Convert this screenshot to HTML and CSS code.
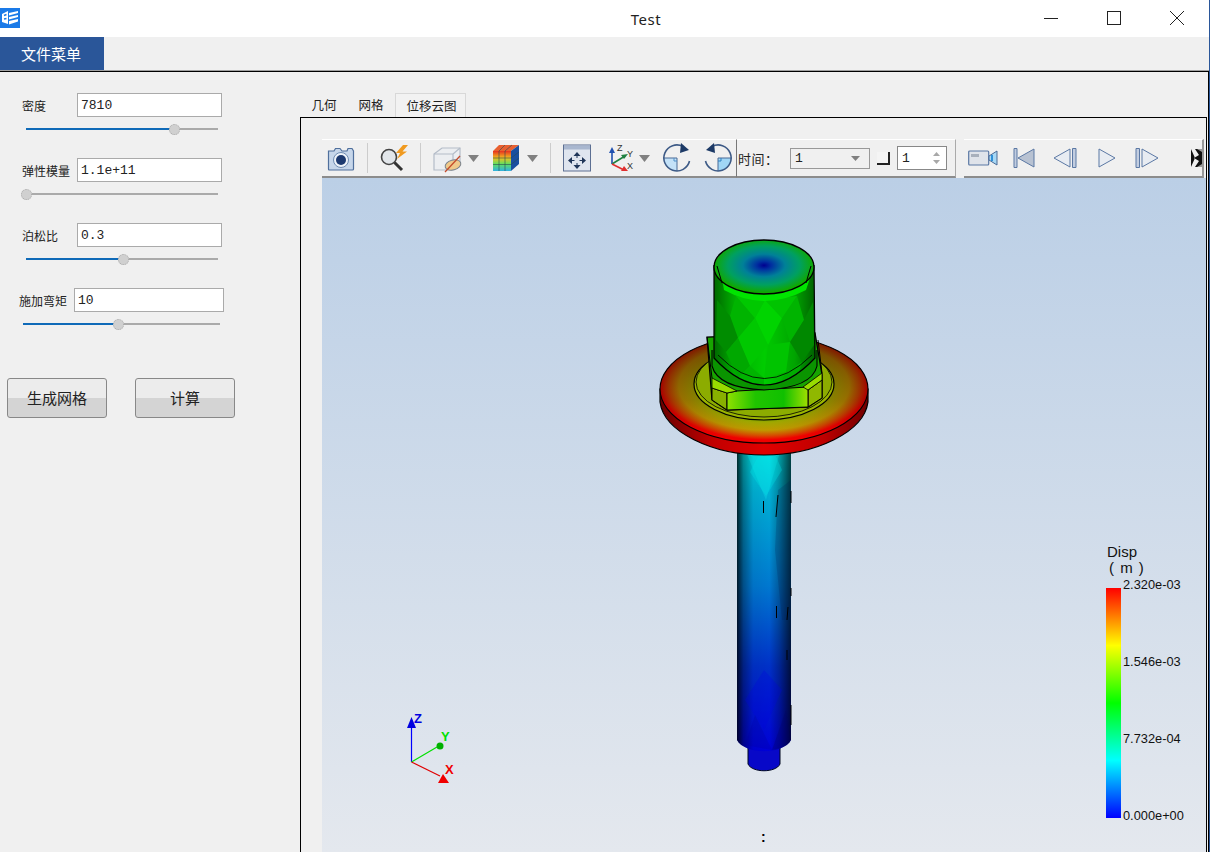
FILE: index.html
```html
<!DOCTYPE html>
<html lang="en">
<head>
  <meta charset="UTF-8">
  <title>Test</title>
  <link rel="stylesheet" href="styles.css">
</head>
<body>
<div class="window">

  <!-- Title bar -->
  <div class="titlebar">
    <svg class="app-logo" viewBox="0 0 20 20">
      <rect width="20" height="20" fill="#1a7ae8"/>
      <path d="M2 6 L8 3 L8 16 L2 14 Z" fill="#fff"/>
      <path d="M4 7.5 L6.5 6.5 M4 11 L6.5 10.5" stroke="#1a7ae8" stroke-width="1.4"/>
      <path d="M9 5 L18 3 L18 5 L9 7.5 Z M9 9 L18 7 L18 9 L9 11.5 Z M9 13 L18 11 L18 13.5 L9 16.5 Z" fill="#fff"/>
    </svg>
    <div class="title">Test</div>
    <svg class="win-ctrl min" viewBox="0 0 14 14"><path d="M0 7.5 H14" stroke="#222" fill="none"/></svg>
    <svg class="win-ctrl max" viewBox="0 0 14 14"><rect x="0.5" y="0.5" width="13" height="13" stroke="#222" fill="none"/></svg>
    <svg class="win-ctrl close" viewBox="0 0 14 14"><path d="M0 0 L14 14 M14 0 L0 14" stroke="#222" fill="none"/></svg>
  </div>

  <!-- Menu -->
  <div class="menubar">
    <button class="menu-tab">文件菜单</button>
  </div>

  <div class="content">

    <!-- Parameters -->
    <div class="side">
      <div class="field">
        <div class="field-row">
          <label>密度</label>
          <input type="text" value="7810">
        </div>
        <div class="slider"><div class="slider-fill" style="width: 77%"></div><div class="slider-knob" style="left: 77%"></div></div>
      </div>
      <div class="field">
        <div class="field-row">
          <label>弹性模量</label>
          <input type="text" value="1.1e+11">
        </div>
        <div class="slider"><div class="slider-fill" style="width: 0%"></div><div class="slider-knob" style="left: 0%"></div></div>
      </div>
      <div class="field">
        <div class="field-row">
          <label>泊松比</label>
          <input type="text" value="0.3">
        </div>
        <div class="slider"><div class="slider-fill" style="width: 50.5%"></div><div class="slider-knob" style="left: 50.5%"></div></div>
      </div>
      <div class="field field-wide">
        <div class="field-row">
          <label>施加弯矩</label>
          <input type="text" value="10">
        </div>
        <div class="slider"><div class="slider-fill" style="width: 48%"></div><div class="slider-knob" style="left: 48%"></div></div>
      </div>
      <div class="actions">
        <button class="action-btn">生成网格</button>
        <button class="action-btn">计算</button>
      </div>
    </div>

    <!-- Result views -->
    <div class="main">
      <div class="tabs">
        <div class="tab">几何</div>
        <div class="tab">网格</div>
        <div class="tab active">位移云图</div>
      </div>
      <div class="pane">
        <div class="toolbar">
          <div class="tool-seg seg-view">
            <svg class="tool" viewBox="0 0 28 28">
              <path d="M1.5 7 H7 L8.5 4.5 H13 L15 7 H20 L21 4.5 H25 L26.5 7 V25 Q26.5 26 25.5 26 H2.5 Q1.5 26 1.5 25 Z" fill="#c6d6ea" stroke="#4f6f9c" stroke-width="1.2"/>
              <circle cx="14" cy="16" r="7.5" fill="#eef3f9" stroke="#6f8cb2"/>
              <circle cx="14" cy="16" r="5" fill="#1d3a70"/>
            </svg>
            <div class="tool-sep"></div>
            <svg class="tool" viewBox="0 0 28 28">
              <circle cx="9" cy="13" r="7.5" fill="#e2e6ea" stroke="#444" stroke-width="1.6"/>
              <path d="M14.5 18.5 L22 26" stroke="#333" stroke-width="3"/>
              <path d="M23 1 L16 9 H20 L17 15 L27 7.5 H22.5 L28 1 Z" fill="#f09a20"/>
            </svg>
            <div class="tool-sep"></div>
            <svg class="tool" viewBox="0 0 28 28">
              <path d="M1 10 L9 4 H27 V19 L20 26 H1 Z" fill="#eceef1" stroke="#b4bcc8" stroke-width="1.2"/>
              <path d="M1 10 H20 V26 M20 10 L27 4" fill="none" stroke="#b4bcc8" stroke-width="1.2"/>
              <ellipse cx="20" cy="21" rx="8" ry="5" fill="#efc98a" stroke="#77808c" transform="rotate(-15 20 21)"/>
              <path d="M12 28 L27 12" stroke="#c44a2a" stroke-width="1.2"/>
            </svg>
            <svg class="drop ml7" viewBox="0 0 11 7"><path d="M0 0 H11 L5.5 7 Z" fill="#808080"/></svg>
            <svg class="tool ml13" viewBox="0 0 28 28">
              <defs>
                <linearGradient id="cubeFace" x1="0" y1="0" x2="0" y2="1">
                  <stop offset="0" stop-color="#e83020"/><stop offset=".35" stop-color="#f0c020"/>
                  <stop offset=".65" stop-color="#60e060"/><stop offset="1" stop-color="#30b0e0"/>
                </linearGradient>
              </defs>
              <path d="M1 7 H19 V27 H1 Z" fill="url(#cubeFace)"/>
              <path d="M1 7 L7 1 H27 L19 7 Z" fill="#e86030"/>
              <path d="M19 7 L27 1 V20 L19 27 Z" fill="#1a4fa0"/>
              <path d="M7 7 V27 M13 7 V27 M1 14 H19 M1 20.5 H19 M7 7 L13 1 M13 7 L20 1 M19 14 L27 8 M19 20.5 L27 14" stroke="#2a4a50" stroke-width=".6" fill="none"/>
            </svg>
            <svg class="drop ml7" viewBox="0 0 11 7"><path d="M0 0 H11 L5.5 7 Z" fill="#808080"/></svg>
            <div class="tool-sep"></div>
            <svg class="tool" viewBox="0 0 28 28">
              <rect x=".5" y="1" width="27" height="26" fill="#dfe5ef" stroke="#5c6f92"/>
              <rect x="1" y="1.5" width="26" height="4" fill="#a9b7cf"/>
              <path d="M14 8 L10.5 12 H17.5 Z M14 25 L10.5 21 H17.5 Z M5 16.5 L9 13 V20 Z M23 16.5 L19 13 V20 Z" fill="#1f3558"/>
              <path d="M14 12 V14 M14 19 V21 M9 16.5 H11.5 M16.5 16.5 H19" stroke="#1f3558"/>
            </svg>
            <svg class="tool ml16" viewBox="0 0 28 28">
              <path d="M5 20 V7" stroke="#2050b0" stroke-width="1.6"/><path d="M5 3 L2 9 H8 Z" fill="#2050b0"/>
              <path d="M5 20 L18 12" stroke="#208040" stroke-width="1.6"/><path d="M21 10 L14 11 L17 15 Z" fill="#208040"/>
              <path d="M5 20 L17 26" stroke="#e03030" stroke-width="1.6"/><path d="M21 27 L14 27 L17 22 Z" fill="#e03030"/>
              <text class="axis-mini" x="10" y="7">Z</text>
              <text class="axis-mini" x="20" y="13">Y</text>
              <text class="axis-mini" x="20" y="25">X</text>
            </svg>
            <svg class="drop ml4" viewBox="0 0 11 7"><path d="M0 0 H11 L5.5 7 Z" fill="#808080"/></svg>
            <svg class="tool ml13" viewBox="0 0 28 28">
              <path d="M14 14 V27 A13 13 0 0 1 1 14 Z" fill="#c4e2f8"/>
              <path d="M1 14 H14 V27" fill="none" stroke="#4a6a96"/>
              <path d="M11 14 V17 H14" fill="none" stroke="#5090c8"/>
              <path d="M20 2.5 A13 13 0 1 0 26.5 17" fill="none" stroke="#3d5a86" stroke-width="1.6"/>
              <path d="M18 -1 L26 6 L17 9 Z" fill="#1d3a66"/>
            </svg>
            <svg class="tool ml13" viewBox="0 0 28 28">
              <path d="M14 14 H27 A13 13 0 0 1 14 27 Z" fill="#a0d6f6"/>
              <path d="M14 27 V14 H27" fill="none" stroke="#4a6a96"/>
              <path d="M14 17 H17 V14" fill="none" stroke="#3080c0"/>
              <path d="M8 2.5 A13 13 0 1 1 1.5 17" fill="none" stroke="#3d5a86" stroke-width="1.6"/>
              <path d="M10 -1 L2 6 L11 9 Z" fill="#1d3a66"/>
            </svg>
          </div>

          <div class="tool-seg seg-time">
            <span class="time-label">时间：</span>
            <div class="combo"><span>1</span><svg class="combo-arrow" viewBox="0 0 9 5"><path d="M0 0 H9 L4.5 5 Z" fill="#808080"/></svg></div>
            <div class="corner"></div>
            <div class="spin">
              <span>1</span>
              <svg class="spin-arrows" viewBox="0 0 7 12"><path d="M3.5 0 L7 4 H0 Z M3.5 12 L0 8 H7 Z" fill="#a8a8a8"/></svg>
            </div>
          </div>

          <div class="tool-seg seg-play">
            <svg class="tool-wide" viewBox="0 0 30 18">
              <rect x=".7" y="2" width="20" height="14" rx="1" fill="#dfe3ea" stroke="#5b78a4" stroke-width="1.2"/>
              <rect x="3" y="5" width="8" height="3" fill="#a8b0bc"/>
              <path d="M21 7 L29 2 V16 L21 11 Z" fill="#a8d8f4" stroke="#4a6a96"/>
              <path d="M24 6 V12" stroke="#2f90d8" stroke-width="2"/>
            </svg>
            <svg class="tool-step ml15" viewBox="0 0 22 20">
              <path d="M1 0.5 H4 V19.5 H1 Z" fill="#c2cde0" stroke="#5b78a4"/>
              <path d="M21 1 V19 L5 10 Z" fill="#b8c2d2" stroke="#5b78a4"/>
            </svg>
            <svg class="tool-step2 ml18" viewBox="0 0 24 20">
              <path d="M17 1 V19 L1 10 Z" fill="#e8ecf2" stroke="#5b78a4"/>
              <path d="M19.5 0.5 H23 V19.5 H19.5 Z" fill="#c2cde0" stroke="#5b78a4"/>
            </svg>
            <svg class="tool-play ml21" viewBox="0 0 18 20">
              <path d="M1 1 V19 L17 10 Z" fill="#e8ecf2" stroke="#5b78a4"/>
            </svg>
            <svg class="tool-step2 ml19" viewBox="0 0 24 20">
              <path d="M1 0.5 H4.5 V19.5 H1 Z" fill="#c2cde0" stroke="#5b78a4"/>
              <path d="M7 1 V19 L23 10 Z" fill="#e8ecf2" stroke="#5b78a4"/>
            </svg>
            <svg class="tool-more" viewBox="0 0 11 18">
              <rect width="11" height="18" fill="#111"/>
              <path d="M0 0 H4 L8 6 L3 9 L8 12 L4 18 H0 L4 9 Z" fill="#f0f0f0"/>
              <path d="M6 0 H11 V3 Z M6 18 H11 V15 Z" fill="#999"/>
            </svg>
          </div>
        </div>

        <div class="viewport">
          <svg class="scene" viewBox="322 178 883 674">
            <defs>
              <linearGradient id="shaftColor" x1="0" y1="0" x2="0" y2="1">
                <stop offset="0" stop-color="#00d8dc"/>
                <stop offset=".14" stop-color="#00b0d4"/>
                <stop offset=".45" stop-color="#0078d0"/>
                <stop offset=".72" stop-color="#0030c8"/>
                <stop offset="1" stop-color="#0000d8"/>
              </linearGradient>
              <linearGradient id="shaftShade" x1="0" y1="0" x2="1" y2="0">
                <stop offset="0" stop-color="#000" stop-opacity=".8"/>
                <stop offset=".12" stop-color="#000" stop-opacity=".35"/>
                <stop offset=".3" stop-color="#000" stop-opacity=".05"/>
                <stop offset=".6" stop-color="#000" stop-opacity="0"/>
                <stop offset=".78" stop-color="#000" stop-opacity=".25"/>
                <stop offset="1" stop-color="#000" stop-opacity=".7"/>
              </linearGradient>
              <radialGradient id="flangeTop" cx=".5" cy=".47" r=".5">
                <stop offset=".5" stop-color="#40c000"/>
                <stop offset=".68" stop-color="#b0c000"/>
                <stop offset=".82" stop-color="#c8a400"/>
                <stop offset=".92" stop-color="#d85000"/>
                <stop offset="1" stop-color="#f00000"/>
              </radialGradient>
              <linearGradient id="flangeShade" x1="0" y1="0" x2="0" y2="1">
                <stop offset="0" stop-color="#300000" stop-opacity=".6"/>
                <stop offset=".6" stop-color="#300000" stop-opacity=".32"/>
                <stop offset=".95" stop-color="#300000" stop-opacity="0"/>
              </linearGradient>
              <linearGradient id="flangeSide" x1="0" y1="0" x2="1" y2="0">
                <stop offset="0" stop-color="#6a0000"/>
                <stop offset=".25" stop-color="#c00000"/>
                <stop offset=".5" stop-color="#e00000"/>
                <stop offset=".78" stop-color="#c00000"/>
                <stop offset="1" stop-color="#700000"/>
              </linearGradient>
              <linearGradient id="capSide" x1="0" y1="0" x2="1" y2="0">
                <stop offset="0" stop-color="#006800"/>
                <stop offset=".2" stop-color="#00ac00"/>
                <stop offset=".5" stop-color="#00cc00"/>
                <stop offset=".8" stop-color="#00a400"/>
                <stop offset="1" stop-color="#006000"/>
              </linearGradient>
              <radialGradient id="capTop" cx=".5" cy=".47" r=".5">
                <stop offset="0" stop-color="#000090"/>
                <stop offset=".15" stop-color="#0030a0"/>
                <stop offset=".42" stop-color="#008098"/>
                <stop offset=".72" stop-color="#00a060"/>
                <stop offset="1" stop-color="#10a800"/>
              </radialGradient>
              <linearGradient id="nutFront" x1="0" y1="0" x2="1" y2="0">
                <stop offset="0" stop-color="#90e000"/>
                <stop offset=".35" stop-color="#20c400"/>
                <stop offset=".7" stop-color="#10c000"/>
                <stop offset="1" stop-color="#a0e000"/>
              </linearGradient>
              <linearGradient id="legendBar" x1="0" y1="0" x2="0" y2="1">
                <stop offset="0" stop-color="#ff0000"/>
                <stop offset=".25" stop-color="#ffff00"/>
                <stop offset=".5" stop-color="#00ff00"/>
                <stop offset=".75" stop-color="#00ffff"/>
                <stop offset="1" stop-color="#0000ff"/>
              </linearGradient>
              <clipPath id="shaftClip"><path d="M737 450 V740 C745 755 783 755 791 740 V450 Z"/></clipPath>
              <clipPath id="capClip"><path d="M714 265 L714 358 Q764 412 815 358 L814 265 Z"/></clipPath>
            </defs>

            <!-- shaft -->
            <path d="M748 745 V764 C752 773 776 773 780 764 V745 Z" fill="#0808c8" stroke="#000820" class="edge"/>
            <path d="M737 450 V740 C745 755 783 755 791 740 V450 Z" fill="url(#shaftColor)"/>
            <path d="M737 450 V740 C745 755 783 755 791 740 V450 Z" fill="url(#shaftShade)"/>
            <g clip-path="url(#shaftClip)">
              <path d="M746 452 L766 500 L780 452 Z" fill="#20ffff" opacity=".2"/>
              <path d="M760 452 L750 472 L766 496 L782 470 L774 452 Z" fill="#00e8e8" opacity=".3"/>
              <path d="M778 490 L775 550 L782 620 L791 620 L791 480 Z" fill="#001850" opacity=".2"/>
              <path d="M745 700 L764 730 L782 690 L764 670 Z" fill="#0000e0" opacity=".25"/>
              <path d="M745 745 L755 715 L772 750 Z" fill="#000090" opacity=".2"/>
              <path d="M772 750 L786 710 L791 745 Z" fill="#000060" opacity=".25"/>
            </g>
            <path d="M763.5 501 V513 M778 495 L776 517 M791 491 V503 M776.5 606 V618 M788 607 L787 620 M791 588 V596 M791 705 V725 M787 650 V660" stroke="#000" fill="none"/>

            <!-- flange -->
            <path d="M660 389 V402 C664 432 712 455 764 455 C816 455 864 432 868 402 V389 Z" fill="url(#flangeSide)" stroke="#000" stroke-width="1.2"/>
            <ellipse cx="764" cy="389" rx="104" ry="54" fill="url(#flangeTop)"/>
            <ellipse cx="764" cy="389" rx="104" ry="54" fill="url(#flangeShade)"/>
            <ellipse cx="764" cy="389" rx="104" ry="54" fill="none" stroke="#000" stroke-width="1.1"/>
            <ellipse cx="764" cy="384" rx="70" ry="36" fill="#9ab400" stroke="#000" stroke-width="1.2"/>
            <ellipse cx="764" cy="382" rx="68" ry="35" fill="#8cac00" stroke="#000" stroke-width=".8"/>

            <!-- nut -->
            <path d="M707 337 L712 400 L727 410 L808 407 L822 398 V375 L815 333 Z" fill="#18a400" stroke="#000" stroke-width="1.3"/>
            <path d="M712 388 L727 393 V410 L712 400 Z" fill="#88b000" stroke="#000"/>
            <path d="M808 390 L822 380 V398 L808 407 Z" fill="#90b800" stroke="#000"/>
            <path d="M727 393 L737 391 L808 387 V407 L727 410 Z" fill="url(#nutFront)" stroke="#000"/>
            <path d="M712 378 L737 391 L727 393 L712 388 Z" fill="#98dc00" stroke="#000" stroke-width=".8"/>
            <path d="M803 387 L822 373 V380 L808 390 Z" fill="#98dc00" stroke="#000" stroke-width=".8"/>
            <path d="M707 337 L712 378 M818 340 L822 373" stroke="#000" fill="none"/>
            <path d="M712 350 V366 Q718 388 764 390 Q812 388 817 366 V350" fill="#0a9400" stroke="#000" stroke-width="1.1"/>

            <!-- cap -->
            <path d="M714 265 L714 358 Q764 412 815 358 L814 265 Z" fill="url(#capSide)"/>
            <g clip-path="url(#capClip)">
              <path d="M736 296 L755 318 L738 338 L730 316 Z" fill="#00b400"/>
              <path d="M755 318 L765 300 L782 318 L768 345 Z" fill="#00d400"/>
              <path d="M782 318 L797 296 L804 320 L790 342 Z" fill="#00b400"/>
              <path d="M738 338 L755 318 L768 345 L750 366 Z" fill="#00c800"/>
              <path d="M768 345 L790 342 L786 372 L764 378 Z" fill="#00c400"/>
              <path d="M717 300 L730 316 L738 338 L726 352 L716 340 Z" fill="#008c00"/>
              <path d="M804 320 L813 302 L814 345 L802 362 L790 342 Z" fill="#008800"/>
              <path d="M726 352 L738 338 L750 366 L738 378 Z" fill="#00a800"/>
              <path d="M750 366 L764 378 L764 392 L738 378 Z" fill="#00b400"/>
              <path d="M786 372 L802 362 L796 382 L776 392 Z" fill="#00ac00"/>
              <path d="M736 296 L755 318 L765 300 Z" fill="#00c800"/>
              <path d="M765 300 L782 318 L797 296 Z" fill="#00c400"/>
              <path d="M722 278 L724 290 Q764 312 806 290 L810 278 Z" fill="#00e400"/>
            </g>
            <path d="M714 265 L714 358 Q764 412 815 358 L814 265" fill="none" stroke="#000" stroke-width="1.2"/>
            <path d="M718 355 Q764 402 812 355" fill="none" stroke="#000" stroke-width=".8"/>
            <ellipse cx="764" cy="267" rx="50" ry="27" fill="url(#capTop)" stroke="#000" stroke-width="1.3"/>
            <path d="M717 266 L722 283 M811 266 L806 283" stroke="#000" fill="none"/>

            <!-- axes -->
            <path d="M411.5 762 V726" stroke="#0000ff" stroke-width="1.2"/>
            <path d="M411.5 717 L416 728 H407 Z" fill="#0000e0"/>
            <path d="M411.5 762 L437 747" stroke="#00e000" stroke-width="1.2"/>
            <circle cx="440" cy="746" r="3.5" fill="#00b000"/>
            <path d="M411.5 762 L440 776" stroke="#e00000" stroke-width="1.2"/>
            <path d="M449 783 L438 783 L443 774 Z" fill="#f00000"/>
            <text class="axis-label axis-z" x="414" y="723">Z</text>
            <text class="axis-label axis-y" x="441" y="741">Y</text>
            <text class="axis-label axis-x" x="445" y="774">X</text>

            <!-- legend -->
            <text class="legend-title" x="1107" y="557">Disp</text>
            <text class="legend-title legend-unit" x="1109" y="573">( m )</text>
            <rect x="1106" y="588" width="15" height="230" fill="url(#legendBar)"/>
            <text class="legend-tick" x="1123" y="589">2.320e-03</text>
            <text class="legend-tick" x="1123" y="666">1.546e-03</text>
            <text class="legend-tick" x="1123" y="743">7.732e-04</text>
            <text class="legend-tick" x="1123" y="820">0.000e+00</text>

            <text class="scene-note" x="761" y="842">:</text>
          </svg>
        </div>
      </div>
    </div>
  </div>
</div>
</body>
</html>
```
FILE: styles.css
```css
* {
  margin: 0;
  padding: 0;
  box-sizing: border-box;
}

body {
  font-family: "Noto Sans CJK SC", "Liberation Sans", sans-serif;
  background-color: #f0f0f0;
  overflow: hidden;
}

.window {
  width: 1210px;
  height: 852px;
  display: flex;
  flex-direction: column;
  border-right: 1px solid #2a5699;
  overflow: hidden;
}

/* Title bar */
.titlebar {
  height: 37px;
  flex-shrink: 0;
  background-color: #ffffff;
  display: flex;
  align-items: flex-start;
}

.app-logo {
  width: 20px;
  height: 20px;
  margin-top: 8px;
}

.title {
  width: 1024px;
  padding-left: 228px;
  padding-top: 9px;
  text-align: center;
  font-family: "Noto Sans", sans-serif;
  font-size: 15px;
  line-height: 20px;
  letter-spacing: 0.5px;
  color: #222;
}

.win-ctrl {
  width: 14px;
  height: 14px;
  margin-top: 11px;
}

.win-ctrl.max,
.win-ctrl.close {
  margin-left: 49px;
}

/* Menu */
.menubar {
  height: 34px;
  flex-shrink: 0;
  background-color: #f0f0f0;
  border-bottom: 1px solid #a0a0a0;
}

.menu-tab {
  width: 104px;
  height: 33px;
  display: block;
  padding-right: 2px;
  background-color: #2a5699;
  color: white;
  border: none;
  font-family: inherit;
  font-size: 15px;
}

.content {
  flex: 1;
  display: flex;
  min-height: 0;
  border-top: 1px solid #000;
  border-right: 1px solid #000;
}

/* Left panel */
.side {
  width: 300px;
  flex-shrink: 0;
  padding-top: 21px;
}

.field {
  height: 65px;
  padding-left: 22px;
}

.field-row {
  display: flex;
  align-items: center;
}

.field-row label {
  width: 55px;
  font-size: 12px;
  color: #222;
}

.field-row input {
  width: 145px;
  height: 24px;
  padding: 0 3px;
  border: 1px solid #aaa;
  background: #fff;
  font-family: "Liberation Mono", monospace;
  font-size: 13px;
  color: #222;
  outline: none;
}

.field-wide {
  padding-left: 19px;
}

.field-wide .field-row input {
  width: 150px;
}

.slider {
  position: relative;
  width: 192px;
  height: 2px;
  margin: 11px 0 0 4px;
  background-color: #aaa;
}

.field-wide .slider {
  width: 197px;
}

.slider-fill {
  height: 2px;
  background-color: #0f6ab8;
}

.slider-knob {
  position: absolute;
  top: -4px;
  width: 11px;
  height: 11px;
  margin-left: -5px;
  border-radius: 50%;
  background-color: #d0d0d0;
  border: 1px dotted #aaa;
}

.actions {
  display: flex;
  gap: 28px;
  padding-left: 7px;
  margin-top: 25px;
}

.action-btn {
  width: 100px;
  height: 40px;
  padding-bottom: 2px;
  border: 1px solid #888;
  border-radius: 3px;
  background: linear-gradient(#ececec 50%, #d4d4d4 50%);
  font-family: inherit;
  font-size: 15px;
  color: #222;
}

/* Tabs */
.main {
  flex: 1;
  min-width: 0;
  display: flex;
  flex-direction: column;
  padding-top: 21px;
  padding-right: 1px;
}

.tabs {
  height: 24px;
  display: flex;
  flex-shrink: 0;
  padding-left: 1px;
}

.tab {
  width: 46px;
  padding-top: 3px;
  font-size: 12.5px;
  line-height: 18px;
  color: #222;
  text-align: center;
  margin-right: 1px;
}

.tab.active {
  width: 71px;
  padding-left: 2px;
  border: 1px solid #d8d8d8;
  border-bottom: none;
  background-color: #f2f2f2;
}

.pane {
  flex: 1;
  min-height: 0;
  border: 1px solid #000;
  border-bottom: none;
  padding: 21px 0 0 21px;
  display: flex;
  flex-direction: column;
}

/* Toolbar */
.toolbar {
  height: 39px;
  flex-shrink: 0;
  display: flex;
  width: 882px;
  background-color: #f0f0f0;
}

.tool-seg {
  display: flex;
  align-items: center;
  height: 39px;
  border-top: 1px solid #fff;
  border-bottom: 2px solid #8c8c8c;
}

.seg-view {
  width: 415px;
  padding-left: 5px;
  border-right: 1px solid #777;
}

.seg-time {
  width: 219px;
  padding-left: 1px;
  border-right: 1px solid #aaa;
}

.seg-play {
  width: 240px;
  margin-left: 8px;
  padding-left: 4px;
  border-right: 2px solid #999;
}

.tool {
  width: 28px;
  height: 28px;
  flex-shrink: 0;
  overflow: visible;
}

.tool-sep {
  width: 1px;
  height: 30px;
  margin: 0 12px;
  background-color: #ccc;
}

.drop {
  width: 11px;
  height: 7px;
}

.ml4 { margin-left: 4px; }
.ml7 { margin-left: 7px; }
.ml13 { margin-left: 13px; }
.ml15 { margin-left: 15px; }
.ml16 { margin-left: 16px; }
.ml18 { margin-left: 18px; }
.ml19 { margin-left: 19px; }
.ml21 { margin-left: 21px; }

.axis-mini {
  font-family: "Liberation Sans", sans-serif;
  font-size: 9px;
  fill: #333;
}

.time-label {
  width: 52px;
  font-size: 13px;
  color: #222;
  letter-spacing: 0.5px;
}

.combo {
  width: 80px;
  height: 21px;
  display: flex;
  align-items: center;
  justify-content: space-between;
  padding: 0 9px 0 4px;
  border: 1px solid #999;
  font-family: "Liberation Mono", monospace;
  font-size: 13px;
  color: #222;
}

.combo-arrow {
  width: 9px;
  height: 5px;
}

.corner {
  width: 13px;
  height: 13px;
  margin: 0 7px;
  background-color: #f4f4f4;
  border-right: 2px solid #222;
  border-bottom: 2px solid #222;
}

.spin {
  width: 50px;
  height: 24px;
  display: flex;
  align-items: center;
  justify-content: space-between;
  padding: 0 6px 0 4px;
  border: 1px solid #888;
  background: #fff;
  font-family: "Liberation Mono", monospace;
  font-size: 13px;
  color: #222;
}

.spin-arrows {
  width: 7px;
  height: 12px;
}

.tool-wide {
  width: 30px;
  height: 18px;
}

.tool-step {
  width: 22px;
  height: 20px;
}

.tool-step2 {
  width: 24px;
  height: 20px;
}

.tool-play {
  width: 18px;
  height: 20px;
}

.tool-more {
  width: 11px;
  height: 18px;
  margin-left: 32px;
}

/* 3D view */
.viewport {
  flex: 1;
  min-height: 0;
  background: linear-gradient(#bbcfe6, #e4e8ee);
}

.scene {
  display: block;
  width: 883px;
  height: 674px;
}

.edge {
  stroke-width: 1;
}

.axis-label {
  font-family: "Liberation Sans", sans-serif;
  font-size: 13px;
  font-weight: bold;
}

.axis-z { fill: #0000e0; }
.axis-y { fill: #00e000; }
.axis-x { fill: #f00000; }

.legend-title {
  font-family: "Liberation Sans", sans-serif;
  font-size: 15px;
  fill: #111;
}

.legend-unit {
  word-spacing: 2px;
}

.legend-tick {
  font-family: "Liberation Sans", sans-serif;
  font-size: 12.8px;
  fill: #111;
}

.scene-note {
  font-family: "Liberation Sans", sans-serif;
  font-size: 14px;
  font-weight: bold;
  fill: #000;
}
```
